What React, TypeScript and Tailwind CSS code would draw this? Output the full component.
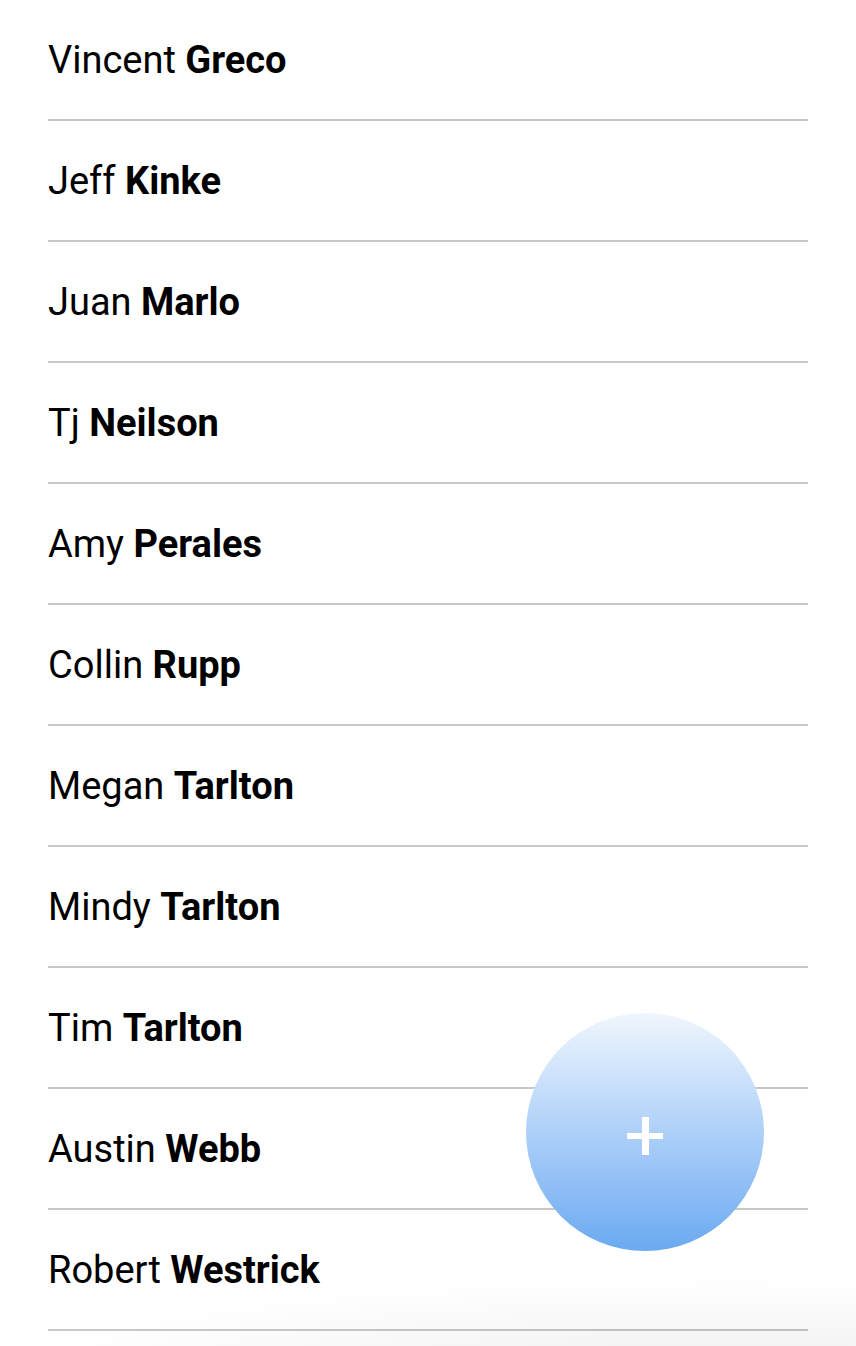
const people = [
  ["Vincent", "Greco"],
  ["Jeff", "Kinke"],
  ["Juan", "Marlo"],
  ["Tj", "Neilson"],
  ["Amy", "Perales"],
  ["Collin", "Rupp"],
  ["Megan", "Tarlton"],
  ["Mindy", "Tarlton"],
  ["Tim", "Tarlton"],
  ["Austin", "Webb"],
  ["Robert", "Westrick"],
];

export default function App() {
  return (
    <div className="relative h-[1346px] w-[856px] overflow-hidden bg-white font-['Roboto',sans-serif] text-black">
      <ul className="px-12">
        {people.map(([first, last], i) => (
          <li
            key={i}
            className="flex h-[121px] items-center border-b-2 border-[#c8c8c8] text-[38px] leading-none"
          >
            <span>
              {first} <b className="font-bold">{last}</b>
            </span>
          </li>
        ))}
      </ul>

      <div className="pointer-events-none absolute inset-x-0 bottom-0 h-[70px] bg-[radial-gradient(ellipse_at_85%_130%,rgba(0,0,0,0.06),rgba(0,0,0,0)_70%)]" />

      <button className="absolute left-[526px] top-[1013px] flex h-[238px] w-[238px] items-center justify-center rounded-full bg-gradient-to-b from-[#f0f6fd] to-[#6aa9f0]">
        <svg className="mt-2" width="36" height="38" viewBox="0 0 36 38">
          <rect x="15" y="0" width="7" height="38" fill="white" />
          <rect x="0" y="16" width="36" height="6" fill="white" />
        </svg>
      </button>
    </div>
  );
}
